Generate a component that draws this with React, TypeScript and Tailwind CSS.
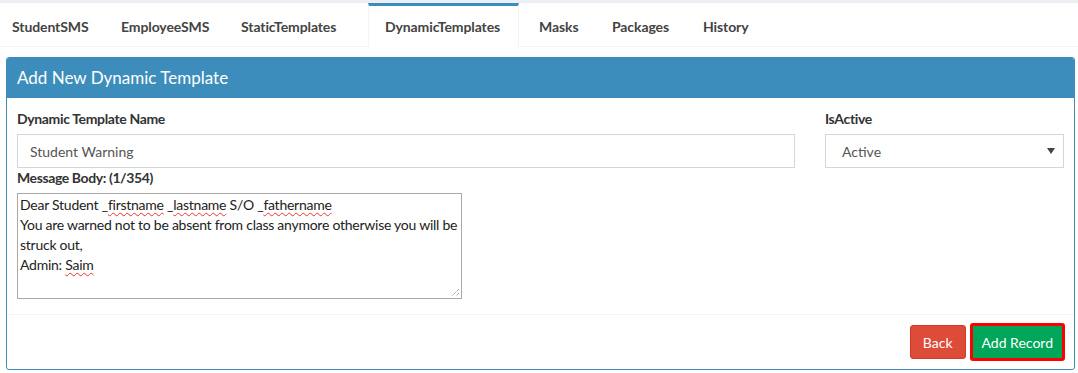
import React from "react";

const tabs: { label: string; w: string }[] = [
  { label: "StudentSMS", w: "w-[104px] pl-[12px]" },
  { label: "EmployeeSMS", w: "w-[120px] pl-[17px]" },
  { label: "StaticTemplates", w: "w-[144px] pl-[17px]" },
  { label: "DynamicTemplates", w: "w-[151px] pl-[16px] mr-[3px]" },
  { label: "Masks", w: "w-[73px] pl-[17px]" },
  { label: "Packages", w: "w-[91px] pl-[17px]" },
  { label: "History", w: "w-[90px] pl-[17px]" },
];

function Squig({ children }: { children: React.ReactNode }) {
  return (
    <span className="underline decoration-wavy decoration-[#e33] decoration-1 underline-offset-2">{children}</span>
  );
}

export default function App() {
  return (
    <div className="w-[1078px] h-[373px] bg-white text-[#333] overflow-hidden" style={{ fontFamily: "Lato, 'Liberation Sans', sans-serif" }}>
      <div className="h-[3px] bg-[#ecf0f5]" />
      <div className="flex border-b border-[#f4f4f4] h-[44px]">
        {tabs.map((t) => {
          const active = t.label === "DynamicTemplates";
          return (
            <div
              key={t.label}
              className={
                "flex items-center text-[14px] font-bold text-[#444] tracking-[-0.1px] border-t-[3px] " +
                t.w +
                " " +
                (active ? "border-t-[#3c8dbc] border-x border-x-[#f4f4f4] bg-white -mb-px" : "border-t-transparent")
              }
            >
              {t.label}
            </div>
          );
        })}
      </div>
      <div className="ml-[6px] mr-[3px] mt-[10px] border border-[#3c8dbc] rounded-[3px] overflow-hidden">
        <div className="h-[40px] bg-[#3c8dbc] flex items-center px-[10px] text-white text-[17px]">
          Add New Dynamic Template
        </div>
        <div className="px-[10px] pt-[11px] pb-[15px]">
          <div className="flex gap-[30px]">
            <div className="flex-1">
              <div className="text-[14px] font-bold leading-[20px] mb-[5px] tracking-[-0.35px]">Dynamic Template Name</div>
              <div className="h-[34px] border border-[#d2d6de] flex items-center px-[12px] text-[14px] text-[#555]">
                Student Warning
              </div>
            </div>
            <div className="w-[239px]">
              <div className="text-[14px] font-bold leading-[20px] mb-[5px] tracking-[-0.35px]">IsActive</div>
              <div className="h-[34px] border border-[#d2d6de] flex items-center justify-between pl-[16px] pr-[8px] text-[14px] text-[#555]">
                <span>Active</span>
                <svg width="8" height="6" viewBox="0 0 8 6"><path d="M0 0h8L4 6z" fill="#444" /></svg>
              </div>
            </div>
          </div>
          <div className="text-[14px] font-bold leading-[20px] mb-[5px] tracking-[-0.4px]">Message Body: (1/354)</div>
          <div className="relative w-[445px] h-[106px] border border-[#a9a9a9] px-[2px] pt-[1px] text-[14px] leading-[20px] text-[#222] tracking-[-0.25px]">
            <div>
              Dear Student _<Squig>firstname</Squig> _<Squig>lastname</Squig> S/O _<Squig>fathername</Squig>
            </div>
            <div>You are warned not to be absent from class anymore otherwise you will be struck out,</div>
            <div>
              Admin: <Squig>Saim</Squig>
            </div>
            <svg className="absolute right-[1px] bottom-[1px]" width="9" height="9" viewBox="0 0 9 9">
              <path d="M8 1L1 8M8 5L5 8" stroke="#777" strokeWidth="1" strokeDasharray="1 1" />
            </svg>
          </div>
        </div>
        <div className="border-t border-[#f4f4f4] pl-[10px] pr-[9px] pt-[8px] pb-[8px] flex justify-end items-center gap-[4px]">
          <button className="h-[34px] px-[12px] bg-[#dd4b39] border border-[#d73925] rounded-[3px] text-white text-[14px]">
            Back
          </button>
          <button className="h-[38px] px-[9px] bg-[#00a65a] border-[3px] border-[#ff0000] rounded-[3px] text-white text-[14px]">
            Add Record
          </button>
        </div>
      </div>
    </div>
  );
}
